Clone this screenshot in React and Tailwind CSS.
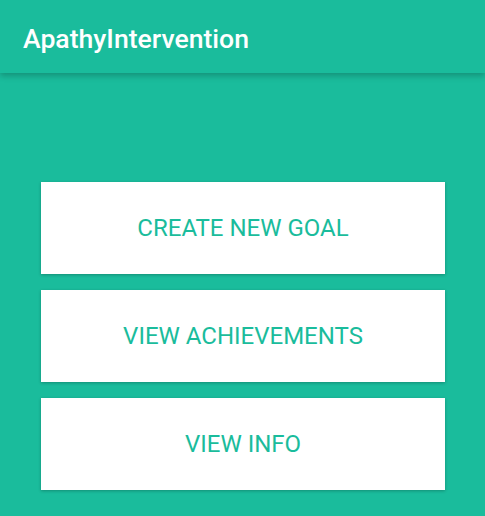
export default function App() {
  const buttons = ["CREATE NEW GOAL", "VIEW ACHIEVEMENTS", "VIEW INFO"];
  return (
    <div className="w-[485px] h-[516px] bg-[#1abc9c] overflow-hidden" style={{ fontFamily: "Roboto, 'Noto Sans', sans-serif" }}>
      <div className="relative z-10 h-[73px] flex items-center pl-[23px] pt-[4px] bg-[#1abc9c] shadow-[0_3px_6px_rgba(0,0,0,0.22)]">
        <span className="text-[26.6px] font-medium text-white">ApathyIntervention</span>
      </div>
      <div className="flex flex-col gap-[16px] pt-[109px] pl-[41px]">
        {buttons.map((b) => (
          <div
            key={b}
            className="w-[404px] h-[92px] bg-white flex items-center justify-center shadow-[0_1px_3px_rgba(0,0,0,0.25)]"
          >
            <span className="text-[24px] text-[#1abc9c]">{b}</span>
          </div>
        ))}
      </div>
    </div>
  );
}
